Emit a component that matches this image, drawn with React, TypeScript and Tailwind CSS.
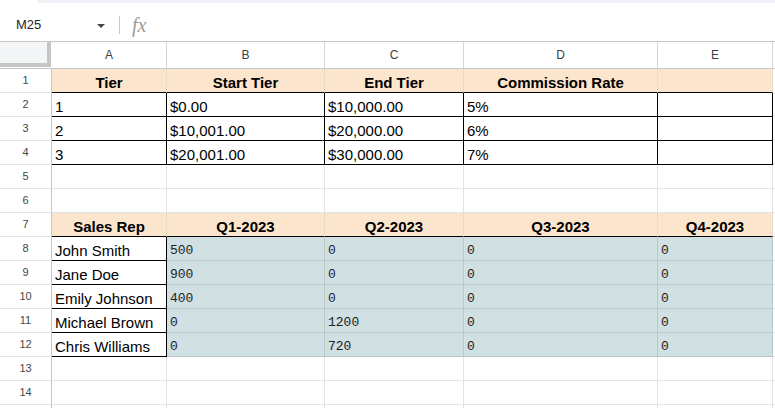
import React from 'react';

type Cell = { t?: string; k?: 'h' | 'x' | 'm'; bg?: 'p' | 'c'; bb?: boolean; rb?: boolean };

const cols = ['A', 'B', 'C', 'D', 'E'];

const bgClass = { n: 'bg-white', p: 'bg-[#fce5cd]', c: 'bg-[#d0e0e3]' };
const lineR = { n: 'border-r-[#e2e3e3]', p: 'border-r-[#eadbc9]', c: 'border-r-[#b8c8cb]' };
const lineB = { n: 'border-b-[#e2e3e3]', p: 'border-b-[#eadbc9]', c: 'border-b-[#b8c8cb]' };
const kindClass = {
  h: 'justify-center font-bold text-[15px] text-black',
  x: 'pl-[3px] text-[15px] text-black',
  m: "pl-[3px] text-[13px] text-[#222] slashed-zero font-['Liberation_Mono',monospace]",
};

const head = (labels: string[]): Cell[] => labels.map((t) => ({ t, k: 'h', bg: 'p', bb: true }));
const boxed = (vals: string[]): Cell[] => vals.map((t) => ({ t, k: 'x', bb: true, rb: true }));
const sales = (name: string, q: string[]): Cell[] => [
  { t: name, k: 'x', bb: true, rb: true },
  ...q.map((t) => ({ t, k: 'm' as const, bg: 'c' as const })),
];
const empty: Cell[] = [{}, {}, {}, {}, {}];

const rows: Cell[][] = [
  head(['Tier', 'Start Tier', 'End Tier', 'Commission Rate', '']),
  boxed(['1', '$0.00', '$10,000.00', '5%', '']),
  boxed(['2', '$10,001.00', '$20,000.00', '6%', '']),
  boxed(['3', '$20,001.00', '$30,000.00', '7%', '']),
  empty,
  empty,
  head(['Sales Rep', 'Q1-2023', 'Q2-2023', 'Q3-2023', 'Q4-2023']),
  sales('John Smith', ['500', '0', '0', '0']),
  sales('Jane Doe', ['900', '0', '0', '0']),
  sales('Emily Johnson', ['400', '0', '0', '0']),
  sales('Michael Brown', ['0', '1200', '0', '0']),
  sales('Chris Williams', ['0', '720', '0', '0']),
  empty,
  empty,
  empty,
];

const gridCols = 'grid grid-cols-[52px_115px_158px_139px_194px_115px_1fr]';

const FormulaBar = () => (
  <div>
    <div className="ml-[37px] h-[3px] bg-[#f0f4f9]" />
    <div className="flex h-[39px] items-center border-b border-b-[#c4c7c5] pt-[6px]">
      <span className="ml-[16px] w-[81px] text-[13px] text-[#1f1f1f]">M25</span>
      <svg width="8" height="4" viewBox="0 0 8 4" className="mt-[1px]">
        <path d="M0 0h8L4 4z" fill="#444746" />
      </svg>
      <div className="ml-[14px] h-[18px] w-px bg-[#c7c7c7]" />
      <span className="ml-[12px] font-['Liberation_Serif',serif] text-[20px] italic leading-none text-[#9a9a9a]">
        fx
      </span>
    </div>
  </div>
);

const ColumnHeader = () => (
  <div className={`${gridCols} h-[27px]`}>
    <div className="border-b border-b-[#c4c7c5]">
      <div className="h-[25px] w-[51px] border-r-4 border-b-4 border-r-[#c4c7c5] border-b-[#c4c7c5] bg-[#f3f5f7]" />
    </div>
    {cols.map((c) => (
      <div
        key={c}
        className="flex items-center justify-center border-r border-b border-r-[#d3d5d7] border-b-[#c4c7c5] text-[12px] text-[#3c4043]"
      >
        {c}
      </div>
    ))}
    <div className="border-b border-b-[#c4c7c5]" />
  </div>
);

export default function App() {
  return (
    <div className="h-[408px] w-[775px] overflow-hidden bg-white font-['Liberation_Sans',Arial,sans-serif]">
      <FormulaBar />
      <ColumnHeader />
      {rows.map((row, i) => (
        <div key={i} className={`${gridCols} h-[24px]`}>
          <div className="flex items-center justify-center border-r border-b border-r-[#c4c7c5] border-b-[#e2e3e3] text-[11px] text-[#444746]">
            {i < 14 ? i + 1 : ''}
          </div>
          {row.map((cell, j) => {
            const bg = cell.bg ?? 'n';
            const r = cell.rb ? 'border-r-black' : lineR[bg];
            const b = cell.bb ? 'border-b-black' : lineB[bg];
            return (
              <div
                key={j}
                className={`flex items-end overflow-hidden whitespace-nowrap border-r border-b pb-[1px] leading-[17px] ${bgClass[bg]} ${r} ${b} ${kindClass[cell.k ?? 'x']}`}
              >
                {cell.t}
              </div>
            );
          })}
          <div className="border-b border-b-[#e2e3e3]" />
        </div>
      ))}
    </div>
  );
}
